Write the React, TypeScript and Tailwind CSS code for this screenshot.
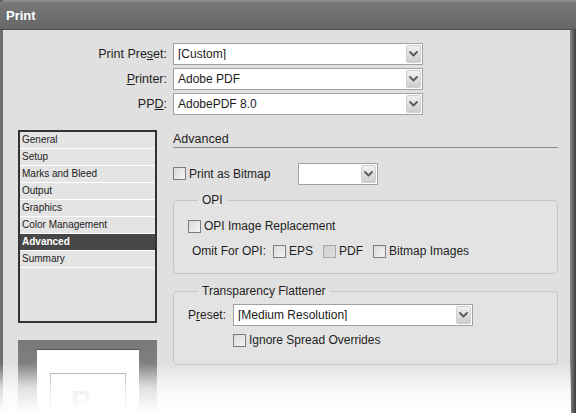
import React from 'react'

const listItems = [
  'General',
  'Setup',
  'Marks and Bleed',
  'Output',
  'Graphics',
  'Color Management',
  'Advanced',
  'Summary',
]

function Chevron() {
  return (
    <svg width="9" height="6" viewBox="0 0 9 6" fill="none">
      <path d="M1 1l3.5 3.5L8 1" stroke="#5a5a5a" strokeWidth="1.8" strokeLinecap="round" strokeLinejoin="round" />
    </svg>
  )
}

function Select({ value, className = '' }: { value?: string; className?: string }) {
  return (
    <div className={`flex h-[22px] items-center border border-[#a2a2a2] bg-white ${className}`}>
      <span className="flex-1 truncate pl-[4px] text-[12px] leading-none text-[#1a1a1a]">{value}</span>
      <div className="mr-[1px] flex h-[18px] w-[15px] items-center justify-center rounded-[2px] border border-[#cfcfcf] bg-gradient-to-b from-[#f2f2f2] to-[#cdcdcd]">
        <Chevron />
      </div>
    </div>
  )
}

function Checkbox({ disabled }: { disabled?: boolean }) {
  return (
    <span
      className={`inline-block h-[13px] w-[13px] shrink-0 border ${
        disabled
          ? 'border-[#a8a8a8] bg-gradient-to-br from-[#cfcfcf] to-[#e0e0e0]'
          : 'border-[#7c7c7c] bg-gradient-to-br from-[#dadada] to-[#f4f4f4]'
      }`}
    />
  )
}

function Check({ label, disabled }: { label: React.ReactNode; disabled?: boolean }) {
  return (
    <label className="flex h-[16px] items-center gap-[3px] leading-[16px]">
      <Checkbox disabled={disabled} />
      <span>{label}</span>
    </label>
  )
}

export default function App() {
  return (
    <div className="relative flex h-[413px] w-[576px] flex-col overflow-hidden bg-[#5b5b5b] font-['Liberation_Sans',Arial,sans-serif] text-[12px] leading-[16px] text-[#1e1e1e]">
      {/* Title bar */}
      <div className="flex h-[30px] shrink-0 items-center rounded-tl-[5px] border-t-2 border-b border-t-[#8c8c8c] border-b-[#4e4e4e] bg-gradient-to-b from-[#777777] to-[#686868] pl-[6px]">
        <span className="text-[13px] font-bold text-white">Print</span>
      </div>

      <div className="flex flex-1">
        <div className="w-[3px] bg-[#6f6f6f]" />
        <div className="flex-1 bg-[#e0e0e0]">
          {/* Preset / printer / PPD */}
          <div className="grid grid-cols-[164px_250px] gap-x-[6px] gap-y-[3px] pt-[13px]">
            <span className="self-center text-right text-[12.5px]">
              Print Pre<u>s</u>et:
            </span>
            <Select value="[Custom]" />
            <span className="self-center text-right text-[12.5px]">
              <u>P</u>rinter:
            </span>
            <Select value="Adobe PDF" className="h-[21px]" />
            <span className="self-center text-right text-[12.5px]">
              PP<u>D</u>:
            </span>
            <Select value="AdobePDF 8.0" className="h-[21px]" />
          </div>

          <div className="mt-[15px] flex gap-[16px] pl-[15px]">
            {/* Left column */}
            <div className="flex w-[139px] flex-col">
              <div className="h-[193px] border-2 border-[#333333] bg-[#e2e2e2]">
                {listItems.map((item) => (
                  <div
                    key={item}
                    className={`flex h-[17px] items-center border-b border-white pl-[2px] text-[10px] ${
                      item === 'Advanced' ? 'bg-[#474747] font-bold text-white' : 'bg-[#e4e4e4] text-[#222]'
                    }`}
                  >
                    {item}
                  </div>
                ))}
              </div>
              <div className="mt-[17px] h-[80px] bg-gradient-to-b from-[#787878] to-[#939393] pl-[19px] pt-[9px]">
                <div className="h-full w-[102px] border-t border-[#555] bg-white pl-[13px] pt-[23px]">
                  <div className="h-full w-[76px] overflow-hidden border border-[#9a9a9a] bg-white pl-[20px] pt-[12px] text-[30px] font-bold leading-none text-[#c4c4c4]">
                    P
                  </div>
                </div>
              </div>
            </div>

            {/* Right column */}
            <div className="flex w-[385px] flex-col">
              <div className="flex h-[18px] items-center border-b border-[#8c8c8c] text-[12.5px]">Advanced</div>

              <div className="mt-[15px] flex h-[21px] items-center">
                <div className="w-[125px]">
                  <Check label="Print as Bitmap" />
                </div>
                <Select className="w-[80px]" />
              </div>

              <fieldset className="mt-[9px] rounded-[4px] border border-[#c6c6c6] bg-[#e3e3e3] pb-[14px] pl-[14px]">
                <legend className="ml-[10px] px-[4px] leading-[14px]">OPI</legend>
                <div className="mt-[11px]">
                  <Check label="OPI Image Replacement" />
                </div>
                <div className="mt-[9px] flex h-[16px] items-center pl-[4px]">
                  <span className="mr-[7px]">Omit For OPI:</span>
                  <div className="w-[50px]">
                    <Check label="EPS" />
                  </div>
                  <div className="w-[50px]">
                    <Check label="PDF" disabled />
                  </div>
                  <Check label="Bitmap Images" />
                </div>
              </fieldset>

              <fieldset className="mt-[10px] rounded-[4px] border border-[#c6c6c6] bg-[#e3e3e3] pb-[16px] pl-[14px]">
                <legend className="ml-[10px] px-[4px] leading-[14px]">Transparency Flattener</legend>
                <div className="mt-[6px] flex items-center">
                  <span className="w-[45px]">
                    P<u>r</u>eset:
                  </span>
                  <Select value="[Medium Resolution]" className="w-[240px]" />
                </div>
                <div className="mt-[6px] pl-[45px]">
                  <Check label="Ignore Spread Overrides" />
                </div>
              </fieldset>
            </div>
          </div>
        </div>
        <div className="w-[6px] bg-gradient-to-r from-[#8a8a8a] to-[#3c3c3c]" />
      </div>

      {/* bottom fade of the screenshot */}
      <div className="pointer-events-none absolute bottom-0 left-0 h-[50px] w-[571px] bg-gradient-to-b from-transparent via-[#ffffff]/75 to-white" />
    </div>
  )
}
